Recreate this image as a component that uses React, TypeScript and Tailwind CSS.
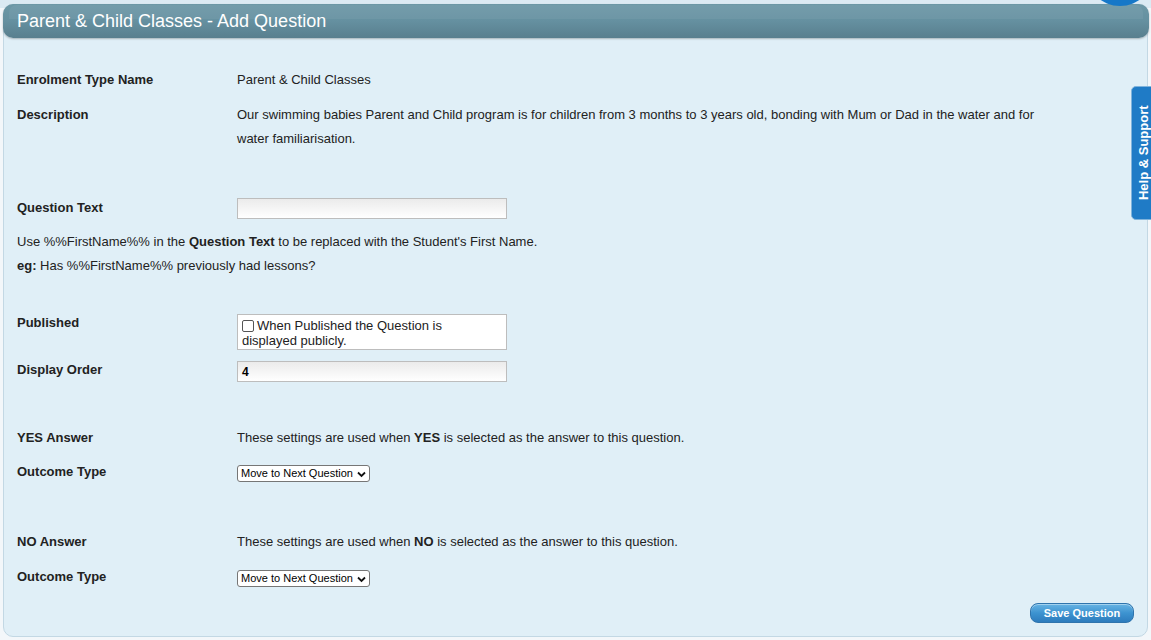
import React from 'react'

const font = { fontFamily: '"Liberation Sans", Arial, sans-serif' }

const Label = ({ children }: { children: React.ReactNode }) => (
  <div className="w-[220px] shrink-0 text-[13px] font-bold leading-6 text-[#222]">{children}</div>
)

const FakeSelect = () => (
  <div className="mt-[5px] flex h-[17px] w-[133px] items-center justify-between rounded-[3px] border border-[#767676] bg-white pl-[3px] pr-[3px] text-[11px] text-black">
    <span>Move to Next Question</span>
    <svg width="9" height="7" viewBox="0 0 9 7" className="mt-[1px]">
      <path d="M1 1.5 L4.5 5 L8 1.5" fill="none" stroke="#111" strokeWidth="1.8" />
    </svg>
  </div>
)

export default function App() {
  return (
    <div className="relative h-[640px] w-[1151px] overflow-hidden bg-[#f3f7fa]" style={font}>
      {/* strip above panel */}
      <div className="absolute left-0 top-0 h-[8px] w-full bg-[#dbeaf3]" />
      {/* blue round thing at top right */}
      <div className="absolute left-[1086px] top-[-62px] z-10 h-[68px] w-[68px] rounded-full bg-[#1678c8]" />

      <div className="relative ml-[3px] mt-[4px] h-[633px] w-[1145px] rounded-b-[10px] rounded-t-[10px] border border-[#c3d8e4] bg-[#e0eff7]">
        {/* header bar */}
        <div className="relative -ml-px -mt-px flex h-[34px] w-[1146px] items-center rounded-[10px] bg-gradient-to-b from-[#6c98a6] via-[#6590a0] to-[#597f8e] pl-[14px] shadow-[0_1px_2px_rgba(0,0,0,0.25)]">
          <div className="absolute left-[6px] right-[6px] top-[1px] h-[14px] rounded-t-[8px] bg-white/5" />
          <h1 className="relative text-[18px] leading-none text-white">Parent &amp; Child Classes - Add Question</h1>
        </div>

        <div className="pl-[13px] text-[13px] text-[#222]">
          <div className="mt-[30px] flex">
            <Label>Enrolment Type Name</Label>
            <div className="leading-6">Parent &amp; Child Classes</div>
          </div>
          <div className="mt-[11px] flex">
            <Label>Description</Label>
            <div className="w-[810px] leading-6">
              Our swimming babies Parent and Child program is for children from 3 months to 3 years old, bonding with Mum or Dad in the water and for water familiarisation.
            </div>
          </div>

          <div className="mt-[45px] flex items-center">
            <Label>Question Text</Label>
            <div className="h-[21px] w-[270px] border border-[#bdbdbd] bg-gradient-to-b from-[#ebebeb] to-white" />
          </div>
          <div className="mt-[10px] leading-6">
            Use %%FirstName%% in the <b>Question Text</b> to be replaced with the Student's First Name.
          </div>
          <div className="leading-6">
            <b>eg:</b> Has %%FirstName%% previously had lessons?
          </div>

          <div className="mt-[33px] flex items-start">
            <Label>Published</Label>
            <div className="mt-[3px] h-[36px] w-[270px] border border-[#bdbdbd] bg-white pl-[4px] pr-[56px] pt-[3px] text-[13px] leading-[15px]">
              <span className="mr-[3px] inline-block h-[12px] w-[12px] translate-y-[1px] rounded-[2px] border border-[#555] bg-white align-[-1px]" />
              When Published the Question is displayed publicly.
            </div>
          </div>
          <div className="mt-[8px] flex items-start">
            <Label>Display Order</Label>
            <div className="mt-[3px] flex h-[21px] w-[270px] items-center border border-[#bdbdbd] bg-gradient-to-b from-[#ebebeb] to-white px-[4px] text-[12px] font-bold text-black">
              4
            </div>
          </div>

          <div className="mt-[44px] flex">
            <Label>YES Answer</Label>
            <div className="leading-6">
              These settings are used when <b>YES</b> is selected as the answer to this question.
            </div>
          </div>
          <div className="mt-[10px] flex items-start">
            <Label>Outcome Type</Label>
            <FakeSelect />
          </div>

          <div className="mt-[46px] flex">
            <Label>NO Answer</Label>
            <div className="leading-6">
              These settings are used when <b>NO</b> is selected as the answer to this question.
            </div>
          </div>
          <div className="mt-[11px] flex items-start">
            <Label>Outcome Type</Label>
            <FakeSelect />
          </div>
        </div>

        <div className="mt-[14px] flex justify-end pr-[13px]">
          <button className="h-[20px] w-[104px] rounded-[8px] border border-[#2f74ad] bg-gradient-to-b from-[#67b4e4] via-[#3d93d0] to-[#2d7cbd] text-[11px] font-bold text-white shadow-[inset_0_1px_0_rgba(255,255,255,0.4)]">
            Save Question
          </button>
        </div>
      </div>

      {/* Help & Support tab */}
      <div className="absolute left-[1131px] top-[86px] flex h-[134px] w-[24px] items-center justify-center rounded-l-[5px] border border-[#7fb3dc] bg-[#1f7bc6]">
        <span className="-rotate-90 whitespace-nowrap text-[13px] font-bold text-white">Help &amp; Support</span>
      </div>
    </div>
  )
}
